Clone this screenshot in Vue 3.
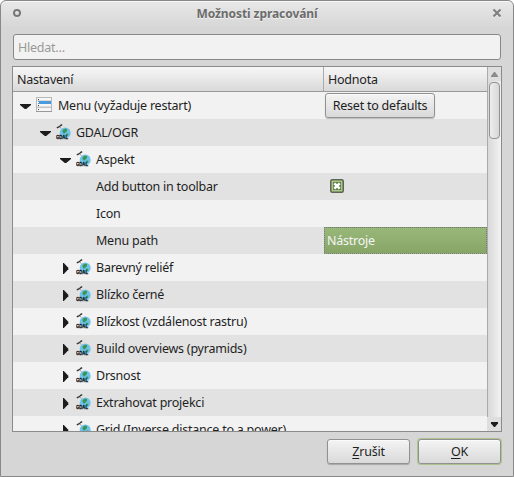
<script setup>
const rows = [
  { label: 'Menu (vyžaduje restart)', depth: 0, arrow: 'open', icon: 'menu', value: 'reset' },
  { label: 'GDAL/OGR', depth: 1, arrow: 'open', icon: 'gdal' },
  { label: 'Aspekt', depth: 2, arrow: 'open', icon: 'gdal' },
  { label: 'Add button in toolbar', depth: 3, value: 'check' },
  { label: 'Icon', depth: 3 },
  { label: 'Menu path', depth: 3, value: 'path' },
  { label: 'Barevný reliéf', depth: 2, arrow: 'closed', icon: 'gdal' },
  { label: 'Blízko černé', depth: 2, arrow: 'closed', icon: 'gdal' },
  { label: 'Blízkost (vzdálenost rastru)', depth: 2, arrow: 'closed', icon: 'gdal' },
  { label: 'Build overviews (pyramids)', depth: 2, arrow: 'closed', icon: 'gdal' },
  { label: 'Drsnost', depth: 2, arrow: 'closed', icon: 'gdal' },
  { label: 'Extrahovat projekci', depth: 2, arrow: 'closed', icon: 'gdal' },
  { label: 'Grid (Inverse distance to a power)', depth: 2, arrow: 'closed', icon: 'gdal' },
]
</script>

<template>
  <div class="window">
    <header class="titlebar">
      <svg class="tb-icon" width="10" height="10" viewBox="0 0 10 10">
        <circle cx="5" cy="5.6" r="3" fill="none" stroke="#fff" stroke-width="2" opacity=".6" />
        <circle cx="5" cy="5" r="3" fill="none" stroke="#777" stroke-width="2" />
      </svg>
      <h1>Možnosti zpracování</h1>
      <svg class="tb-icon" width="10" height="10" viewBox="0 0 10 10">
        <path d="M1.5 2.3l7 7M8.5 2.3l-7 7" stroke="#fff" stroke-width="2" opacity=".6" />
        <path d="M1.5 1.5l7 7M8.5 1.5l-7 7" stroke="#808080" stroke-width="2.2" />
      </svg>
    </header>

    <input class="search" placeholder="Hledat…" />

    <div class="tree">
      <div class="content">
        <div class="head">
          <div class="name-col">Nastavení</div>
          <div class="value-col">Hodnota</div>
        </div>
        <div v-for="row in rows" :key="row.label" class="row">
          <div class="name-cell" :class="'depth' + row.depth">
            <span v-if="row.arrow" class="arrow">
              <svg v-if="row.arrow === 'open'" width="11" height="5" viewBox="0 0 11 5">
                <path d="M0 0h11v1L6.2 5H4.8L0 1z" fill="#1c1c1c" />
              </svg>
              <svg v-else class="closed" width="6" height="11" viewBox="0 0 6 11">
                <path d="M0 0h.8L5.3 4.8v1.4L.8 11H0z" fill="#1c1c1c" />
              </svg>
            </span>
            <svg v-if="row.icon === 'menu'" class="icon menu-icon" width="16" height="16" viewBox="0 0 16 16">
              <rect x=".5" y=".5" width="15" height="14" fill="#f6f6f6" stroke="#b8b8b8" />
              <path d="M0 14.5h16" stroke="#999" />
              <rect x="2" y="4" width="13" height="3" fill="#4a9ade" />
              <path d="M1 3.5h14M1 9.5h14" stroke="#dcdcdc" />
              <path d="M1 10.5h14" stroke="#c4c4c4" />
              <path d="M2 2.5h1M2 8.5h1M2 12.5h1" stroke="#444" />
              <path d="M2 5.5h1" stroke="#fff" />
            </svg>
            <svg v-if="row.icon === 'gdal'" class="icon" width="16" height="16" viewBox="0 0 16 16">
              <circle cx="9.2" cy="8.9" r="5.5" fill="#6cc4ee" />
              <path d="M6.6 5.9l2.6-1.4 2 .8-.4 2.2-1.6 1.2-1.2 1.1-1.4-1.6zM10 9.8l2.4-.4-.3 2.2-1.5 1z" fill="#3f9452" />
              <path d="M.8 3.9l2-1M2.6 3.2l1.8-1.4M4.3 1.7l1.9-1" stroke="#333" stroke-width="1.3" />
              <path d="M4.2 2.8l1 2" stroke="#b59a9a" stroke-width=".9" />
              <text x="0" y="14.5" textLength="12" lengthAdjust="spacingAndGlyphs" class="gdal-text">GDAL</text>
            </svg>
            <span class="label">{{ row.label }}</span>
          </div>
          <div class="value-cell">
            <button v-if="row.value === 'reset'" class="btn reset">Reset to defaults</button>
            <span v-else-if="row.value === 'check'" class="check">
              <svg width="14" height="14" viewBox="0 0 14 14">
                <rect x=".75" y=".75" width="12.5" height="12.5" rx="1.5" fill="#a9c987" stroke="#5c6654" stroke-width="1.5" />
                <rect x="3" y="3" width="8" height="8" fill="#647d4d" />
                <path d="M4.3 4.3l5.4 5.4M9.7 4.3l-5.4 5.4" stroke="#fff" stroke-width="2.5" />
              </svg>
            </span>
            <div v-else-if="row.value === 'path'" class="selected">Nástroje</div>
          </div>
        </div>
      </div>
      <div class="scrollbar">
        <div class="step up">
          <svg width="7" height="5" viewBox="0 0 7 5"><path d="M3 0h1l3 4v1H0V4z" fill="#8b8b8b" /></svg>
        </div>
        <div class="track"><div class="thumb"></div></div>
        <div class="step down">
          <svg width="7" height="5" viewBox="0 0 7 5"><path d="M0 0h7v1.4L4 5H3L0 1.4z" fill="#1c1c1c" /></svg>
        </div>
      </div>
    </div>

    <footer class="actions">
      <button class="btn"><span class="key">Z</span>rušit</button>
      <button class="btn default"><span class="key">O</span>K</button>
    </footer>
  </div>
</template>

<style>
body {
  background: #fff;
  overflow: hidden;
}
</style>

<style scoped>
* {
  box-sizing: border-box;
}
.window {
  width: 514px;
  height: 477px;
  border: 1px solid #888;
  border-radius: 6px 6px 0 0;
  background: linear-gradient(#e8e8e8 0, #d6d6d6 27px);
  box-shadow: inset 0 1px #f8f8f8;
  font: 12.5px/18px "Noto Sans", sans-serif;
  letter-spacing: -.23px;
  color: #1f1f1f;
  display: flex;
  flex-direction: column;
  padding: 0 11px;
}
.titlebar {
  height: 33px;
  flex: none;
  display: flex;
  justify-content: space-between;
  padding: 3px 0 0;
}
.tb-icon {
  margin-top: 4px;
}
h1 {
  margin: 1px 0 0;
  font-size: 12px;
  line-height: 18px;
  letter-spacing: -.08px;
  font-weight: 700;
  color: #6c6c6c;
  text-shadow: 0 1px #f3f3f3;
}
.search {
  flex: none;
  width: 488px;
  height: 26px;
  margin: 0 0 6px 1px;
  border: 1px solid #888;
  border-radius: 3px;
  background: #f2f2f2;
  padding: 0 4px;
  font: inherit;
  letter-spacing: inherit;
  outline: none;
}
.search::placeholder {
  color: #999;
  opacity: 1;
}
.tree {
  width: 490px;
  height: 366px;
  flex: none;
  border: 1px solid #8b8b8b;
  display: flex;
  overflow: hidden;
  background: #f2f2f2;
}
.content {
  width: 474px;
  flex: none;
}
.head {
  display: flex;
  height: 25px;
  border-bottom: 1px solid #999;
  background: linear-gradient(#f7f7f7, #d9d9d9);
  line-height: 26px;
}
.name-col {
  width: 311px;
  height: 24px;
  border-right: 1px solid #aaa;
  padding-left: 4px;
}
.value-col {
  height: 24px;
  padding-left: 4px;
}
.row {
  display: flex;
  height: 27px;
  background: #f2f2f2;
}
.row:nth-child(odd) {
  background: #e2e2e2;
}
.name-cell {
  width: 311px;
  display: flex;
  align-items: center;
  white-space: nowrap;
}
.label {
  padding-top: 1px;
}
.depth0 { padding-left: 7px; }
.depth1 { padding-left: 27px; }
.depth2 { padding-left: 47px; }
.depth3 { padding-left: 83px; }
.arrow {
  width: 16px;
  height: 27px;
  flex: none;
  display: flex;
  align-items: center;
  padding-top: 2px;
}
.closed {
  margin-left: 3px;
}
.icon {
  flex: none;
  margin: 0 4px 1px 0;
}
.menu-icon {
  margin-right: 6px;
}
.gdal-text {
  font: 700 5.8px "Liberation Sans", sans-serif;
  letter-spacing: 0;
  fill: #111;
  stroke: #111;
  stroke-width: .3px;
}
.value-cell {
  flex: 1;
  display: flex;
  align-items: center;
}
.btn {
  border: 1px solid #919191;
  border-radius: 3px;
  background: linear-gradient(#f4f4f4, #d9d9d9);
  box-shadow: inset 0 1px #fafafa, 0 1px 1px rgba(0, 0, 0, .22);
  font: inherit;
  letter-spacing: inherit;
  color: inherit;
  padding: 0;
  white-space: nowrap;
  width: 83px;
  height: 25px;
}
.reset {
  width: 110px;
  margin-left: 1px;
}
.check {
  display: flex;
  margin: 0 0 1px 6px;
}
.selected {
  width: 163px;
  height: 27px;
  border: 1px dotted #777b80;
  background: linear-gradient(#98b87a, #87a567);
  color: #f5f5f5;
  line-height: 25px;
  padding-left: 2px;
}
.scrollbar {
  width: 14px;
  display: flex;
  flex-direction: column;
}
.step {
  height: 14px;
  background: #dedede;
  display: flex;
  align-items: center;
  justify-content: center;
}
.up {
  border-left: 1px solid #aaa;
}
.track {
  flex: 1;
  border-left: 1px solid #aaa;
  background: linear-gradient(90deg, #d9d9d9, #f2f2f2);
  padding: 1px 1px 0;
}
.thumb {
  width: 11px;
  height: 57px;
  border: 1px solid #929292;
  border-radius: 4px;
  background: linear-gradient(90deg, #eee, #d7d7d7);
}
.actions {
  display: flex;
  justify-content: flex-end;
  gap: 8px;
  padding: 7px 1px 0 0;
}
.default {
  box-shadow: inset 0 1px #fafafa, 0 0 0 1px #adc38f;
}
.key {
  text-decoration: underline;
  text-underline-offset: 2px;
}
</style>
